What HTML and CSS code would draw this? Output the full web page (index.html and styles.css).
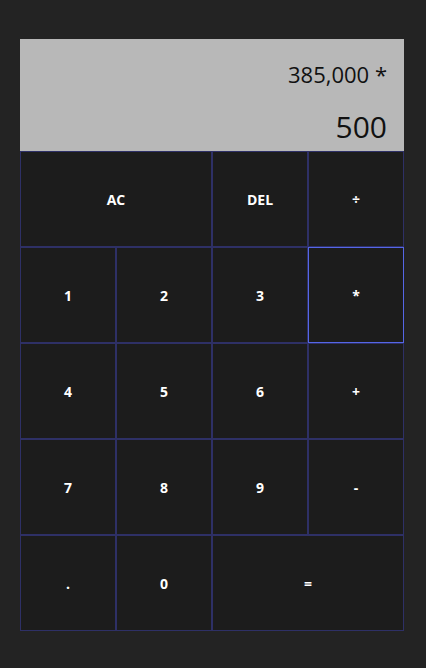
FILE: index.html
```html
<!DOCTYPE html>
<html>
<head>
<meta charset="utf-8">
<link rel="stylesheet" href="styles.css">
</head>
<body>
<div class="calculator">
  <div class="output">
    <div class="previous">385,000 *</div>
    <div class="current">500</div>
  </div>
  <button class="span-two">AC</button>
  <button>DEL</button>
  <button>÷</button>
  <button>1</button>
  <button>2</button>
  <button>3</button>
  <button class="focused">*</button>
  <button>4</button>
  <button>5</button>
  <button>6</button>
  <button>+</button>
  <button>7</button>
  <button>8</button>
  <button>9</button>
  <button>-</button>
  <button>.</button>
  <button>0</button>
  <button class="span-two">=</button>
</div>
</body>
</html>
```
FILE: styles.css
```css
* { box-sizing: border-box; }
html, body { margin: 0; padding: 0; }
body {
  background: #232323;
  font-family: "Open Sans", "Noto Sans", sans-serif;
  padding-top: 39px;
  padding-left: 20px;
}
.calculator {
  display: grid;
  grid-template-columns: repeat(4, 96px);
  grid-template-rows: 112px repeat(5, 96px);
}
.output {
  grid-column: 1 / -1;
  background: #b8b8b8;
  display: flex;
  flex-direction: column;
  align-items: flex-end;
  justify-content: space-between;
  padding: 12px 17px 4px 10px;
  color: #111;
}
.previous { font-size: 22px; line-height: 46px; }
.current { font-size: 30px; line-height: 40px; }
button {
  background: #1c1c1c;
  border: 1px solid #2e3066;
  color: #fff;
  font-family: "Open Sans", "Noto Sans", sans-serif;
  font-weight: 700;
  font-size: 14px;
  padding: 0;
  margin: 0;
  outline: none;
}
.span-two { grid-column: span 2; }
.focused { border-color: #5566e6; }
```
